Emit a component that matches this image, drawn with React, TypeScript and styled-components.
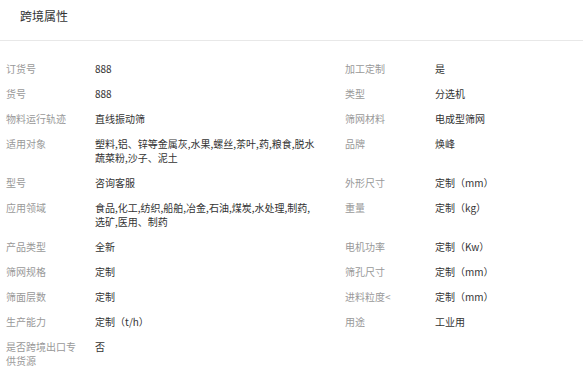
import React from 'react'
import styled, { createGlobalStyle } from 'styled-components'

const GlobalStyle = createGlobalStyle`
    html, body {
        margin: 0;
        padding: 0;
        background: #fff;
    }
    body {
        font-family: "Noto Sans CJK SC", "Noto Sans", sans-serif;
    }
`

const Panel = styled.div`
    width: 583px;
    height: 371px;
    background: #fff;
    overflow: hidden;
`
const Header = styled.div`
    height: 40px;
    border-bottom: 1px solid #e8e8e8;
    padding: 0 20px;
    box-sizing: content-box;
`
const Title = styled.div`
    padding-top: 8px;
    font-size: 12px;
    line-height: 16px;
    color: #333;
`
const Table = styled.div`
    display: grid;
    grid-template-columns: 89px 250px 90px 1fr;
    padding-top: 15px;
`
const Cell = styled.div<{ $label?: boolean }>`
    padding: 5.5px ${p => (p.$label ? '6px' : '24px')} 5.5px 6px;
    font-size: 10px;
    line-height: 14px;
    color: ${p => (p.$label ? '#999' : '#333')};
    word-break: break-all;
`

const rows: [string, string, string?, string?][] = [
    ['订货号', '888', '加工定制', '是'],
    ['货号', '888', '类型', '分选机'],
    ['物料运行轨迹', '直线振动筛', '筛网材料', '电成型筛网'],
    ['适用对象', '塑料,铝、锌等金属灰,水果,螺丝,茶叶,药,粮食,脱水蔬菜粉,沙子、泥土', '品牌', '焕峰'],
    ['型号', '咨询客服', '外形尺寸', '定制（mm）'],
    ['应用领域', '食品,化工,纺织,船舶,冶金,石油,煤炭,水处理,制药,选矿,医用、制药', '重量', '定制（kg）'],
    ['产品类型', '全新', '电机功率', '定制（Kw）'],
    ['筛网规格', '定制', '筛孔尺寸', '定制（mm）'],
    ['筛面层数', '定制', '进料粒度<', '定制（mm）'],
    ['生产能力', '定制（t/h）', '用途', '工业用'],
    ['是否跨境出口专供货源', '否'],
]

const App = () => {
    return (
        <Panel>
            <GlobalStyle />
            <Header>
                <Title>跨境属性</Title>
            </Header>
            <Table>
                {rows.map((row, idx) => (
                    <React.Fragment key={idx}>
                        <Cell $label>{row[0]}</Cell>
                        <Cell>{row[1]}</Cell>
                        <Cell $label>{row[2] || ''}</Cell>
                        <Cell>{row[3] || ''}</Cell>
                    </React.Fragment>
                ))}
            </Table>
        </Panel>
    )
}

export default App
